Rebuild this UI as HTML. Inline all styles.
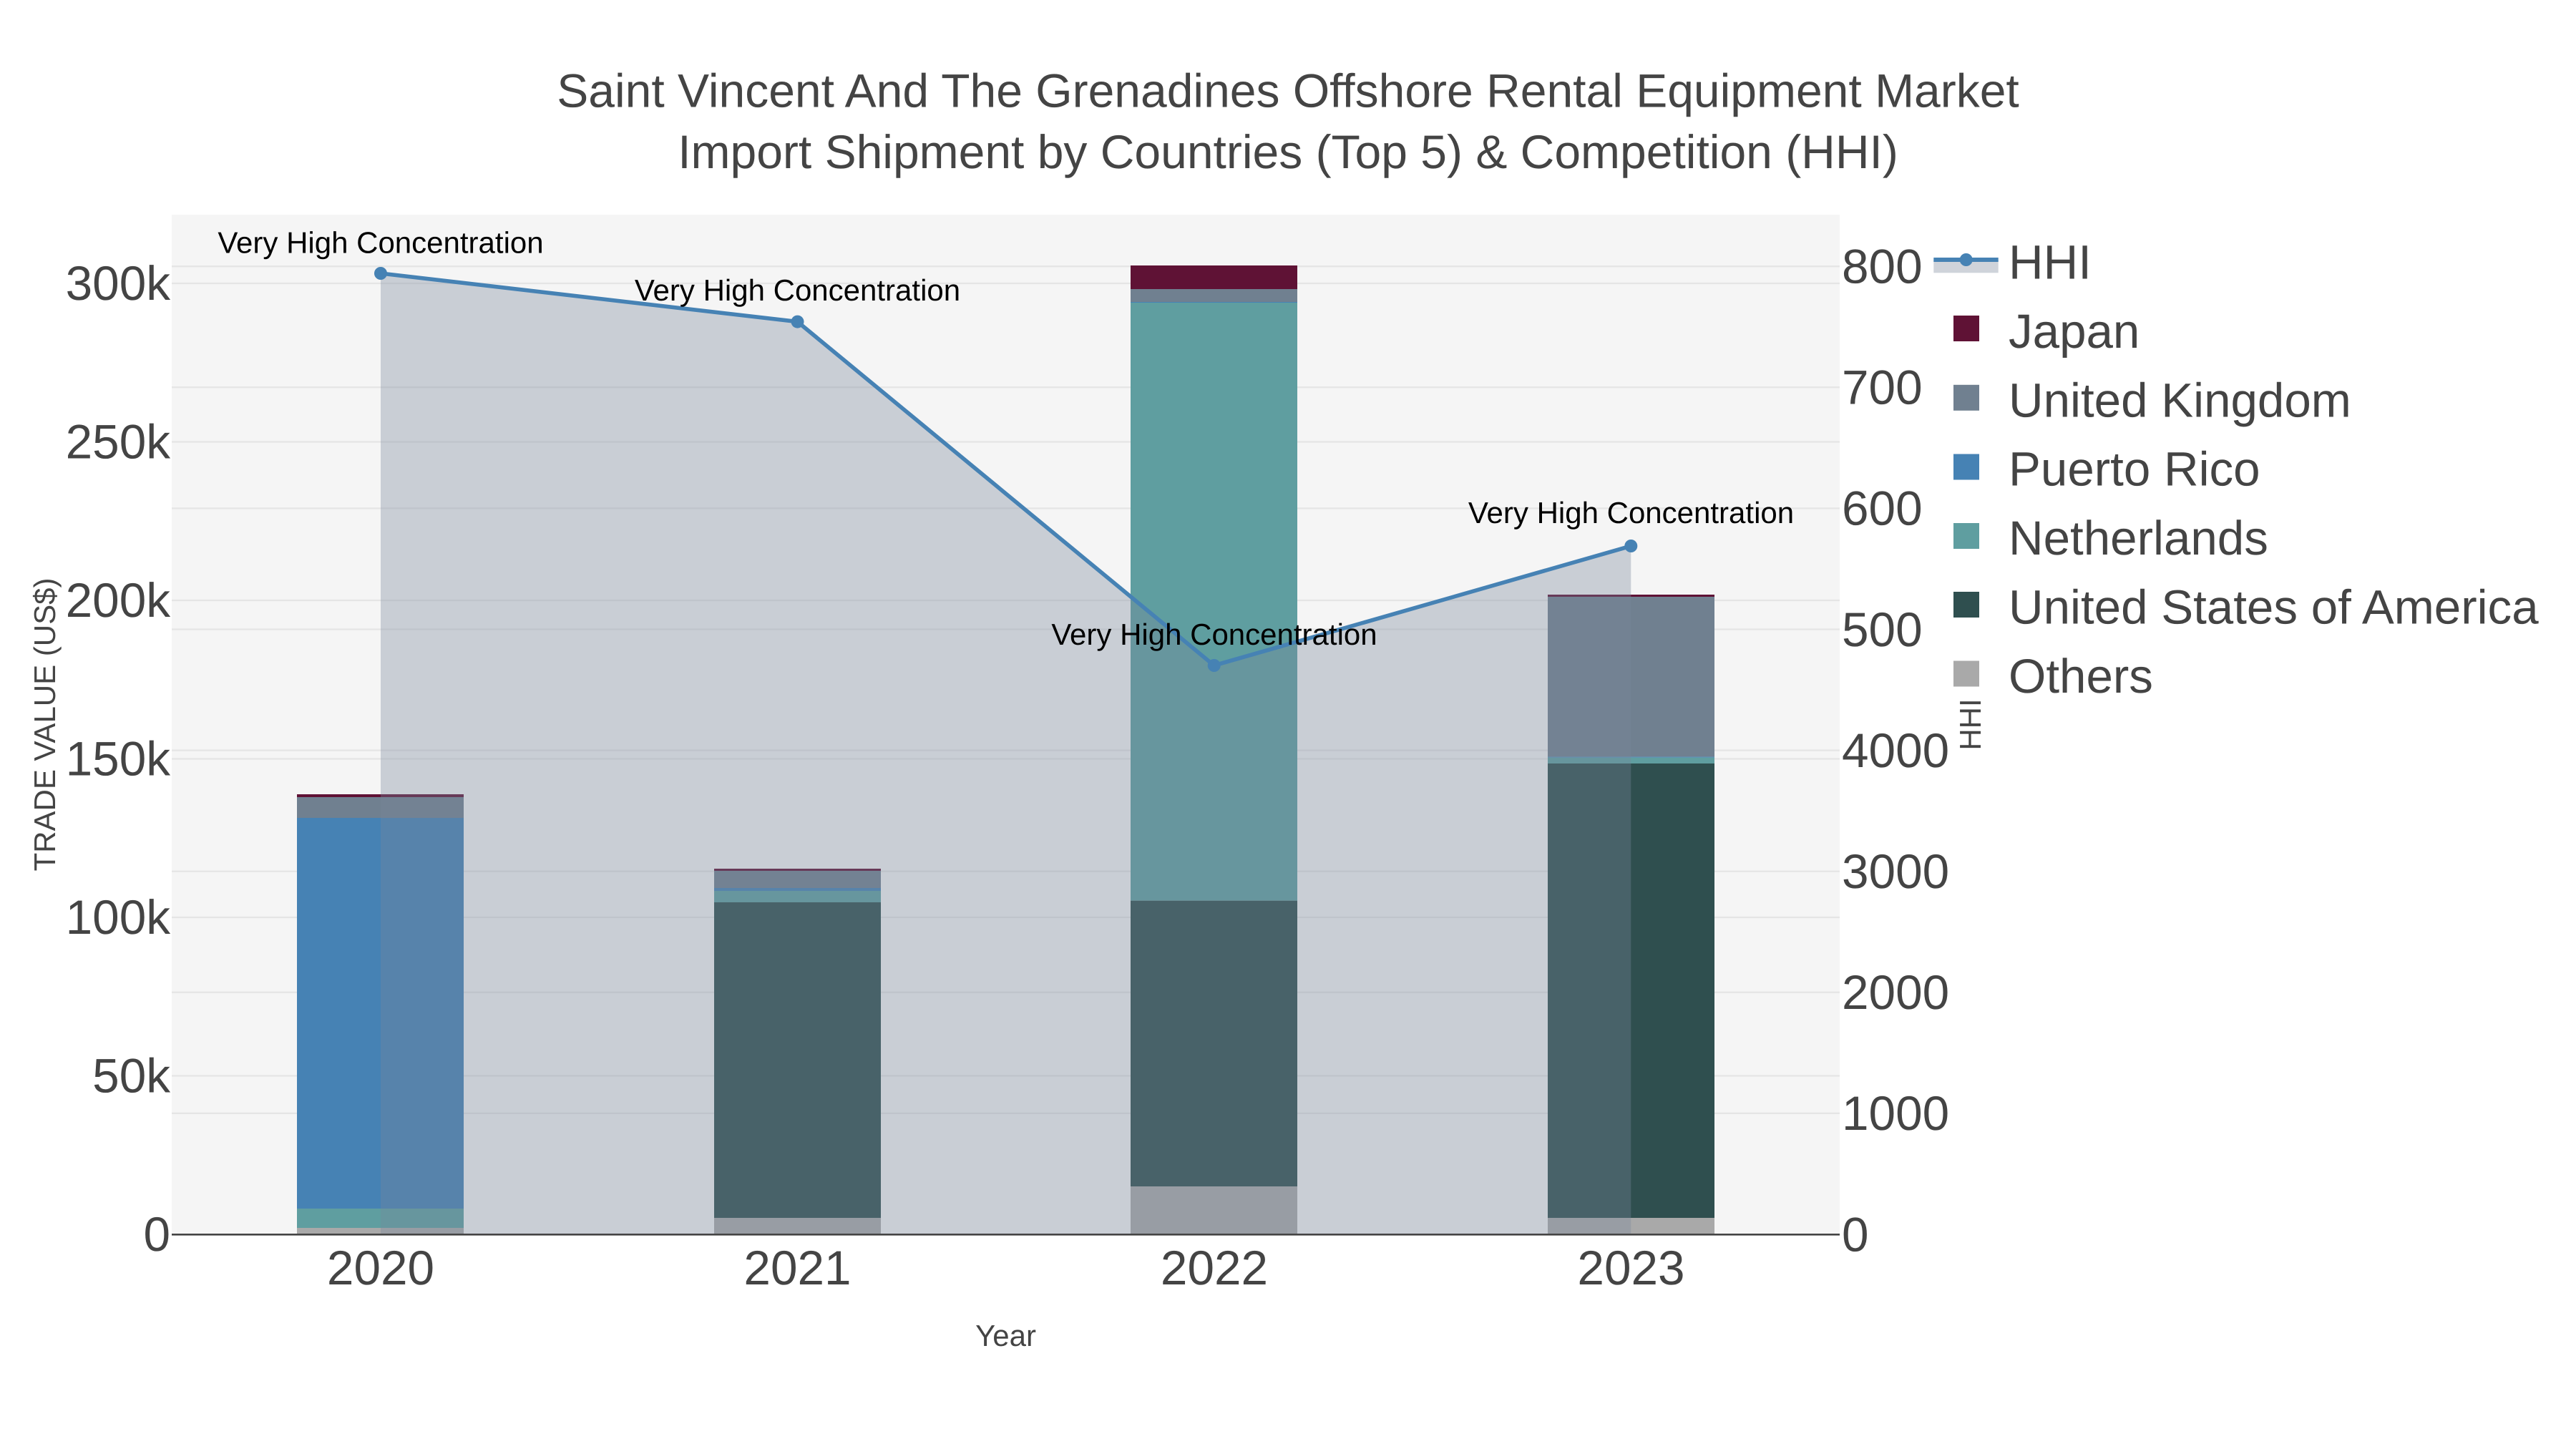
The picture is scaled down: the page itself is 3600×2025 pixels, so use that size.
<!DOCTYPE html>
<html lang="en">
<head>
<meta charset="utf-8">
<title>Saint Vincent And The Grenadines Offshore Rental Equipment Market</title>
<style>
html,body{margin:0;padding:0;background:#fff;width:3600px;height:2025px;overflow:hidden}
svg{display:block}
text{font-family:"Liberation Sans",Arial,sans-serif;fill:#444;text-rendering:geometricPrecision}
.t{font-size:66px}
.k{font-size:67.5px}
.l{font-size:67.3px}
.a{font-size:42px}
.n{font-size:42px;fill:#000}
</style>
</head>
<body>
<svg width="3600" height="2025" viewBox="0 0 3600 2025" xmlns="http://www.w3.org/2000/svg">
<rect width="3600" height="2025" fill="#fff"/>
<rect x="240" y="300" width="2331" height="1425" fill="#f5f5f5"/>
<!-- grid -->
<g stroke="#e5e5e5" stroke-width="2.25">
<path d="M240 1503.5H2571M240 1282H2571M240 1060.5H2571M240 839H2571M240 617.5H2571M240 396H2571"/>
<path d="M240 1555.9H2571M240 1386.8H2571M240 1217.7H2571M240 1048.6H2571M240 879.5H2571M240 710.4H2571M240 541.3H2571M240 372.2H2571"/>
</g>
<!-- bars 2020 -->
<rect x="415" y="1110" width="233" height="4" fill="#5f1235"/>
<rect x="415" y="1114" width="233" height="29" fill="#708090"/>
<rect x="415" y="1143" width="233" height="546" fill="#4682b4"/>
<rect x="415" y="1689" width="233" height="27" fill="#5f9ea0"/>
<rect x="415" y="1716" width="233" height="9" fill="#a9a9a9"/>
<!-- bars 2021 -->
<rect x="998" y="1214" width="233" height="3" fill="#5f1235"/>
<rect x="998" y="1217" width="233" height="24" fill="#708090"/>
<rect x="998" y="1241" width="233" height="4" fill="#4682b4"/>
<rect x="998" y="1245" width="233" height="16" fill="#5f9ea0"/>
<rect x="998" y="1261" width="233" height="441" fill="#2f4f4f"/>
<rect x="998" y="1702" width="233" height="23" fill="#a9a9a9"/>
<!-- bars 2022 -->
<rect x="1580" y="371" width="233" height="33" fill="#5f1235"/>
<rect x="1580" y="404" width="233" height="18.5" fill="#708090"/>
<rect x="1580" y="422" width="233" height="1" fill="#4682b4"/>
<rect x="1580" y="423" width="233" height="835.7" fill="#5f9ea0"/>
<rect x="1580" y="1258.7" width="233" height="399.3" fill="#2f4f4f"/>
<rect x="1580" y="1658" width="233" height="67" fill="#a9a9a9"/>
<!-- bars 2023 -->
<rect x="2163" y="831" width="233" height="3" fill="#5f1235"/>
<rect x="2163" y="834" width="233" height="223.6" fill="#708090"/>
<rect x="2163" y="1057.6" width="233" height="1" fill="#4682b4"/>
<rect x="2163" y="1058.6" width="233" height="8.4" fill="#5f9ea0"/>
<rect x="2163" y="1067" width="233" height="635" fill="#2f4f4f"/>
<rect x="2163" y="1702" width="233" height="23" fill="#a9a9a9"/>
<!-- HHI fill -->
<path d="M532 382L1114.5 449.6L1696.7 930L2279.3 763V1725H532Z" fill="rgb(120,134,155)" fill-opacity=".35"/>
<!-- axis line -->
<path d="M240 1725.3H2571" stroke="#444" stroke-width="2.6"/>
<!-- HHI line -->
<path d="M532 382L1114.5 449.6L1696.7 930L2279.3 763" fill="none" stroke="#4682b4" stroke-width="5.6"/>
<g fill="#4682b4">
<circle cx="532" cy="382" r="9"/>
<circle cx="1114.5" cy="449.6" r="9"/>
<circle cx="1696.7" cy="930" r="9"/>
<circle cx="2279.3" cy="763" r="9"/>
</g>
<!-- annotations -->
<g class="n" text-anchor="middle">
<text class="n" x="532" y="353.6">Very High Concentration</text>
<text class="n" x="1114.5" y="420">Very High Concentration</text>
<text class="n" x="1697" y="901">Very High Concentration</text>
<text class="n" x="2279.5" y="731">Very High Concentration</text>
</g>
<!-- title -->
<text class="t" x="1800" y="149.5" text-anchor="middle">Saint Vincent And The Grenadines Offshore Rental Equipment Market</text>
<text class="t" x="1800" y="235" text-anchor="middle">Import Shipment by Countries (Top 5) &amp; Competition (HHI)</text>
<!-- left ticks -->
<g text-anchor="end">
<text class="k" x="238" y="419">300k</text>
<text class="k" x="238" y="640.5">250k</text>
<text class="k" x="238" y="862">200k</text>
<text class="k" x="238" y="1083.5">150k</text>
<text class="k" x="238" y="1305">100k</text>
<text class="k" x="238" y="1526.5">50k</text>
<text class="k" x="238" y="1748">0</text>
</g>
<!-- right ticks -->
<text class="k" x="2574" y="395.5">800</text>
<text class="k" x="2574" y="564.6">700</text>
<text class="k" x="2574" y="733.7">600</text>
<text class="k" x="2574" y="902.8">500</text>
<text class="k" x="2574" y="1071.9">4000</text>
<text class="k" x="2574" y="1241">3000</text>
<text class="k" x="2574" y="1410.1">2000</text>
<text class="k" x="2574" y="1579.2">1000</text>
<text class="k" x="2574" y="1748.3">0</text>
<!-- x ticks -->
<g text-anchor="middle">
<text class="k" x="532" y="1795">2020</text>
<text class="k" x="1114.5" y="1795">2021</text>
<text class="k" x="1697" y="1795">2022</text>
<text class="k" x="2279.5" y="1795">2023</text>
</g>
<!-- axis titles -->
<text class="a" x="1405.5" y="1881" text-anchor="middle">Year</text>
<text class="a" transform="translate(77,1012.5) rotate(-90)" text-anchor="middle">TRADE VALUE (US$)</text>
<text class="a" transform="translate(2768,1012.5) rotate(-90)" text-anchor="middle">HHI</text>
<!-- legend -->
<rect x="2702.3" y="363" width="90.4" height="18.3" fill="#cfd3da"/>
<path d="M2702.3 363H2792.7" stroke="#4682b4" stroke-width="6"/>
<circle cx="2747.7" cy="363" r="9" fill="#4682b4"/>
<rect x="2730" y="441" width="36" height="36" fill="#5f1235"/>
<rect x="2730" y="537.8" width="36" height="36" fill="#708090"/>
<rect x="2730" y="634.5" width="36" height="36" fill="#4682b4"/>
<rect x="2730" y="731" width="36" height="36" fill="#5f9ea0"/>
<rect x="2730" y="827" width="36" height="36" fill="#2f4f4f"/>
<rect x="2730" y="923.5" width="36" height="36" fill="#a9a9a9"/>
<text class="l" x="2807" y="389.5">HHI</text>
<text class="l" x="2807" y="486">Japan</text>
<text class="l" x="2807" y="582.3">United Kingdom</text>
<text class="l" x="2807" y="678.7">Puerto Rico</text>
<text class="l" x="2807" y="775.1">Netherlands</text>
<text class="l" x="2807" y="871.5">United States of America</text>
<text class="l" x="2807" y="968">Others</text>
</svg>
</body>
</html>
